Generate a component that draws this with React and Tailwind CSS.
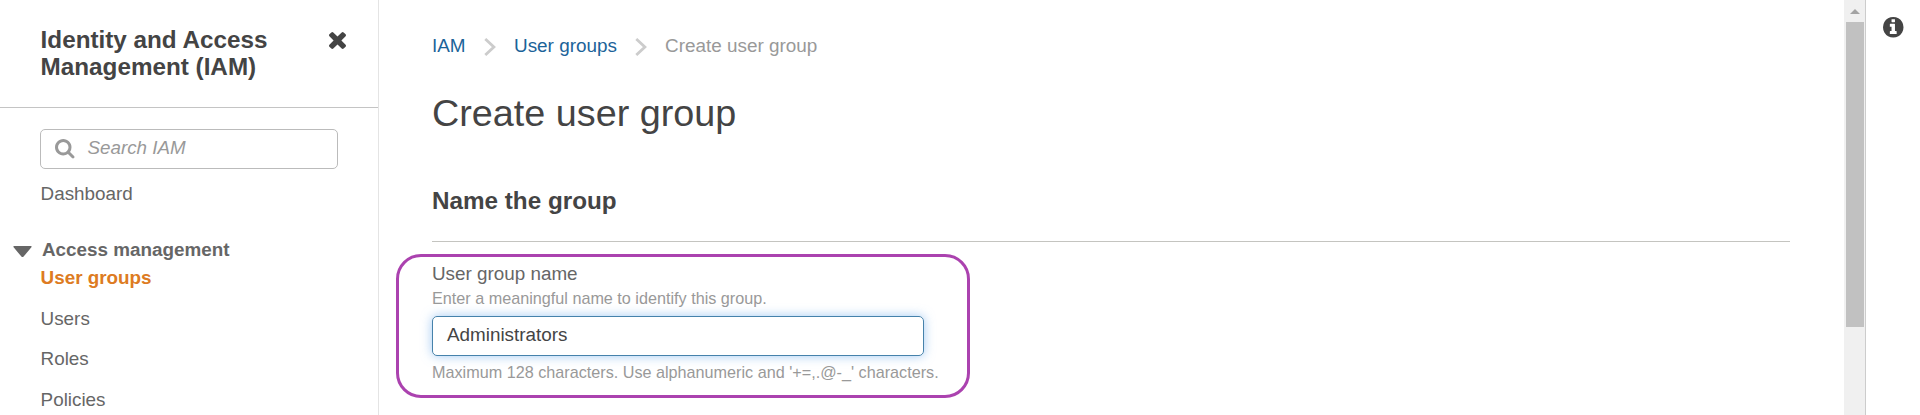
import React from "react";

const CloseIcon = () => (
  <svg className="mt-[6px] h-[17px] w-[17px]" viewBox="110 366 1188 1188" preserveAspectRatio="none" fill="#444">
    <path d="M1298 1322q0 40-28 68l-136 136q-28 28-68 28t-68-28l-294-294-294 294q-28 28-68 28t-68-28l-136-136q-28-28-28-68t28-68l294-294-294-294q-28-28-28-68t28-68l136-136q28-28 68-28t68 28l294 294 294-294q28-28 68-28t68 28l136 136q28 28 28 68t-28 68l-294 294 294 294q28 28 28 68z" />
  </svg>
);

const SearchIcon = () => (
  <svg className="h-[19.5px] w-[19.5px]" viewBox="0 128 1664 1664" fill="#999">
    <path d="M1152 832q0-185-131.5-316.5t-316.5-131.5-316.5 131.5-131.5 316.5 131.5 316.5 316.5 131.5 316.5-131.5 131.5-316.5zm512 832q0 54-38 91t-90 37q-54 0-90-38l-343-342q-179 124-399 124-143 0-273.5-55.5t-225-150-150-225-55.5-273.5 55.5-273.5 150-225 225-150 273.5-55.5 273.5 55.5 225 150 150 225 55.5 273.5q0 220-124 399l343 343q37 37 37 90z" />
  </svg>
);

const InfoIcon = () => (
  <svg className="h-[20.5px] w-[20.5px]" viewBox="0 128 1536 1536" fill="#444">
    <path d="M1024 1376v-160q0-14-9-23t-23-9h-96v-512q0-14-9-23t-23-9h-320q-14 0-23 9t-9 23v160q0 14 9 23t23 9h96v320h-96q-14 0-23 9t-9 23v160q0 14 9 23t23 9h448q14 0 23-9t9-23zm-128-896v-160q0-14-9-23t-23-9h-192q-14 0-23 9t-9 23v160q0 14 9 23t23 9h192q14 0 23-9t9-23zm640 416q0 209-103 385.5t-279.5 279.5-385.5 103-385.5-103-279.5-279.5-103-385.5 103-385.5 279.5-279.5 385.5-103 385.5 103 279.5 279.5 103 385.5z" />
  </svg>
);

const Chevron = () => (
  <svg className="mt-[2px] h-[18px] w-[12px]" viewBox="0 0 12 18" fill="none" stroke="#ccc" strokeWidth="2.8">
    <path d="M1.3 1l8.6 8-8.6 8" />
  </svg>
);

function Sidebar() {
  return (
    <aside className="flex w-[379px] shrink-0 flex-col border-r border-[#e4e4e4]">
      <header className="flex h-[108px] shrink-0 items-start justify-between border-b border-[#c4c4c4] pt-[26px] pr-[32px] pl-[40.6px]">
        <h2 className="w-[260px] text-[24.25px] leading-[27px] font-bold text-[#444]">Identity and Access Management (IAM)</h2>
        <CloseIcon />
      </header>
      <div className="mt-[21px] ml-[40px] flex h-[40px] w-[298px] shrink-0 items-center gap-[13px] rounded-[5px] border border-[#bbb] pl-[14px]">
        <SearchIcon />
        <span className="-mt-[2px] text-[18.8px] leading-[24px] text-[#999] italic">Search IAM</span>
      </div>
      <nav className="flex flex-col text-[18.85px] leading-[24px] text-[#666]">
        <a className="mt-[13px] ml-[40.6px]">Dashboard</a>
        <div className="mt-[32px] flex items-center gap-[10px] pl-[13px] font-bold">
          <svg className="mt-[3px] h-[12px] w-[19px]" viewBox="0 0 19 12" fill="#666">
            <path d="M1.2 0h16.6q1.6 0 .6 1.2L10.6 10.6q-1.1 1-2.2 0L.6 1.2Q-.4 0 1.2 0z" />
          </svg>
          <span>Access management</span>
        </div>
        <a className="mt-[4px] ml-[40.6px] font-bold text-[#dd7b22]">User groups</a>
        <a className="mt-[17px] ml-[40.6px]">Users</a>
        <a className="mt-[16px] ml-[40.6px]">Roles</a>
        <a className="mt-[17px] ml-[40.6px]">Policies</a>
      </nav>
    </aside>
  );
}

function GroupForm() {
  return (
    <section className="mt-[12px] -ml-[36px] flex h-[144px] w-[574px] shrink-0 flex-col rounded-[25px] border-[3px] border-[#ab42af] pl-[33px]">
      <label className="mt-[5px] text-[18.85px] leading-[24px] text-[#666]">User group name</label>
      <p className="mt-[2px] text-[16.2px] leading-[20px] text-[#999]">Enter a meaningful name to identify this group.</p>
      <div className="mt-[8px] flex h-[40px] w-[492px] shrink-0 items-center rounded-[5px] border border-[#4682ab] pl-[14px] shadow-[0_0_11px_rgba(100,165,235,0.6)]">
        <span className="-mt-[2px] text-[18.85px] leading-[24px] text-[#444]">Administrators</span>
      </div>
      <p className="mt-[6px] text-[16.2px] leading-[20px] whitespace-nowrap text-[#999]">
        Maximum 128 characters. Use alphanumeric and '+=,.@-_' characters.
      </p>
    </section>
  );
}

export default function App() {
  return (
    <div className="flex h-[415px] w-[1920px] overflow-hidden bg-white font-['Liberation_Sans',Arial,sans-serif]">
      <Sidebar />
      <main className="flex w-[1465px] shrink-0 flex-col pl-[53px]">
        <nav className="mt-[34px] flex h-[24px] shrink-0 items-center text-[18.9px] leading-[24px]">
          <a className="w-[52px] text-[#1b6399]">IAM</a>
          <Chevron />
          <a className="ml-[18px] w-[121px] whitespace-nowrap text-[#1b6399]">User groups</a>
          <Chevron />
          <span className="ml-[18px] text-[#999]">Create user group</span>
        </nav>
        <h1 className="mt-[33px] text-[37.75px] leading-[44px] text-[#444]">Create user group</h1>
        <h2 className="mt-[52px] text-[24.25px] leading-[27px] font-bold text-[#444]">Name the group</h2>
        <div className="mt-[27px] h-px w-[1358px] shrink-0 bg-[#c4c4c0]" />
        <GroupForm />
      </main>
      <div className="flex w-[21px] shrink-0 flex-col bg-[#f0f0f0] pl-[2px]">
        <div className="flex h-[22px] shrink-0 pt-[9px] pl-[4px]">
          <svg className="h-[5px] w-[10px]" viewBox="0 0 10 5" fill="#a3a3a3">
            <path d="M5 0l5 5H0z" />
          </svg>
        </div>
        <div className="h-[305px] w-[18px] bg-[#c1c1c1]" />
      </div>
      <div className="flex-1 border-l border-[#ccc] pt-[17px] pl-[17px]">
        <InfoIcon />
      </div>
    </div>
  );
}
